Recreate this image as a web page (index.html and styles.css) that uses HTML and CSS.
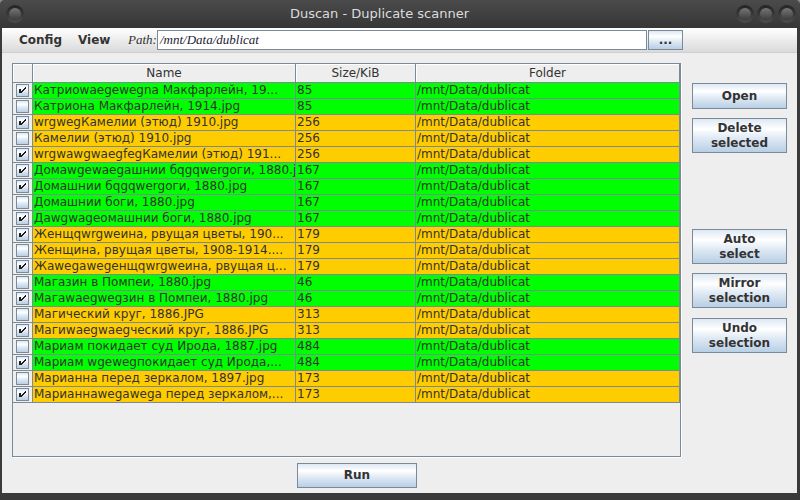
FILE: index.html
```
<!DOCTYPE html>
<html>
<head>
<meta charset="utf-8">
<link rel="stylesheet" href="styles.css">
</head>
<body>
<div class="window">
  <div class="titlebar">
    <div class="tb-left"><span class="orb"></span></div>
    <div class="tb-title">Duscan - Duplicate scanner</div>
    <div class="tb-right"><span class="orb"></span><span class="orb"></span><span class="orb"></span></div>
  </div>
  <div class="frame">
    <div class="menubar">
      <span class="menu m-config">Config</span>
      <span class="menu m-view">View</span>
      <span class="path-label">Path:</span>
      <div class="field">/mnt/Data/dublicat</div>
      <div class="btn dots">...</div>
    </div>
    <div class="main">
      <div class="left">
        <div class="table">
          <div class="row head">
            <div class="hc"></div><div class="hc">Name</div><div class="hc">Size/KiB</div><div class="hc">Folder</div>
          </div>
          <div class="row g"><div class="c cb"><span class="box on"><svg viewBox="0 0 11 11"><path d="M2 4h2v4H2z M4 6h1v2H4z M5 5h1v2H5z M6 4h1v2H6z M7 3h1v2H7z M8 2h1v2H8z"/></svg></span></div><div class="c">Катриowaegewegna Макфарлейн, 19...</div><div class="c">85</div><div class="c">/mnt/Data/dublicat</div></div>
          <div class="row g"><div class="c cb"><span class="box"></span></div><div class="c">Катриона Макфарлейн, 1914.jpg</div><div class="c">85</div><div class="c">/mnt/Data/dublicat</div></div>
          <div class="row o"><div class="c cb"><span class="box on"><svg viewBox="0 0 11 11"><path d="M2 4h2v4H2z M4 6h1v2H4z M5 5h1v2H5z M6 4h1v2H6z M7 3h1v2H7z M8 2h1v2H8z"/></svg></span></div><div class="c">wrgwegКамелии (этюд) 1910.jpg</div><div class="c">256</div><div class="c">/mnt/Data/dublicat</div></div>
          <div class="row o"><div class="c cb"><span class="box"></span></div><div class="c">Камелии (этюд) 1910.jpg</div><div class="c">256</div><div class="c">/mnt/Data/dublicat</div></div>
          <div class="row o"><div class="c cb"><span class="box on"><svg viewBox="0 0 11 11"><path d="M2 4h2v4H2z M4 6h1v2H4z M5 5h1v2H5z M6 4h1v2H6z M7 3h1v2H7z M8 2h1v2H8z"/></svg></span></div><div class="c">wrgwawgwaegfegКамелии (этюд) 191...</div><div class="c">256</div><div class="c">/mnt/Data/dublicat</div></div>
          <div class="row g"><div class="c cb"><span class="box on"><svg viewBox="0 0 11 11"><path d="M2 4h2v4H2z M4 6h1v2H4z M5 5h1v2H5z M6 4h1v2H6z M7 3h1v2H7z M8 2h1v2H8z"/></svg></span></div><div class="c">Домаwgewaegашнии бqgqwergоги, 1880.jpg</div><div class="c">167</div><div class="c">/mnt/Data/dublicat</div></div>
          <div class="row g"><div class="c cb"><span class="box on"><svg viewBox="0 0 11 11"><path d="M2 4h2v4H2z M4 6h1v2H4z M5 5h1v2H5z M6 4h1v2H6z M7 3h1v2H7z M8 2h1v2H8z"/></svg></span></div><div class="c">Домашнии бqgqwergоги, 1880.jpg</div><div class="c">167</div><div class="c">/mnt/Data/dublicat</div></div>
          <div class="row g"><div class="c cb"><span class="box"></span></div><div class="c">Домашнии боги, 1880.jpg</div><div class="c">167</div><div class="c">/mnt/Data/dublicat</div></div>
          <div class="row g"><div class="c cb"><span class="box on"><svg viewBox="0 0 11 11"><path d="M2 4h2v4H2z M4 6h1v2H4z M5 5h1v2H5z M6 4h1v2H6z M7 3h1v2H7z M8 2h1v2H8z"/></svg></span></div><div class="c">Даwgwageомашнии боги, 1880.jpg</div><div class="c">167</div><div class="c">/mnt/Data/dublicat</div></div>
          <div class="row o"><div class="c cb"><span class="box on"><svg viewBox="0 0 11 11"><path d="M2 4h2v4H2z M4 6h1v2H4z M5 5h1v2H5z M6 4h1v2H6z M7 3h1v2H7z M8 2h1v2H8z"/></svg></span></div><div class="c">Женщqwrgweина, рвущая цветы, 190...</div><div class="c">179</div><div class="c">/mnt/Data/dublicat</div></div>
          <div class="row o"><div class="c cb"><span class="box"></span></div><div class="c">Женщина, рвущая цветы, 1908-1914....</div><div class="c">179</div><div class="c">/mnt/Data/dublicat</div></div>
          <div class="row o"><div class="c cb"><span class="box on"><svg viewBox="0 0 11 11"><path d="M2 4h2v4H2z M4 6h1v2H4z M5 5h1v2H5z M6 4h1v2H6z M7 3h1v2H7z M8 2h1v2H8z"/></svg></span></div><div class="c">Жаwegawegенщqwrgweина, рвущая ц...</div><div class="c">179</div><div class="c">/mnt/Data/dublicat</div></div>
          <div class="row g"><div class="c cb"><span class="box"></span></div><div class="c">Магазин в Помпеи, 1880.jpg</div><div class="c">46</div><div class="c">/mnt/Data/dublicat</div></div>
          <div class="row g"><div class="c cb"><span class="box on"><svg viewBox="0 0 11 11"><path d="M2 4h2v4H2z M4 6h1v2H4z M5 5h1v2H5z M6 4h1v2H6z M7 3h1v2H7z M8 2h1v2H8z"/></svg></span></div><div class="c">Магawaegwegзин в Помпеи, 1880.jpg</div><div class="c">46</div><div class="c">/mnt/Data/dublicat</div></div>
          <div class="row o"><div class="c cb"><span class="box"></span></div><div class="c">Магический круг, 1886.JPG</div><div class="c">313</div><div class="c">/mnt/Data/dublicat</div></div>
          <div class="row o"><div class="c cb"><span class="box on"><svg viewBox="0 0 11 11"><path d="M2 4h2v4H2z M4 6h1v2H4z M5 5h1v2H5z M6 4h1v2H6z M7 3h1v2H7z M8 2h1v2H8z"/></svg></span></div><div class="c">Магиwaegwaegческий круг, 1886.JPG</div><div class="c">313</div><div class="c">/mnt/Data/dublicat</div></div>
          <div class="row g"><div class="c cb"><span class="box"></span></div><div class="c">Мариам покидает суд Ирода, 1887.jpg</div><div class="c">484</div><div class="c">/mnt/Data/dublicat</div></div>
          <div class="row g"><div class="c cb"><span class="box on"><svg viewBox="0 0 11 11"><path d="M2 4h2v4H2z M4 6h1v2H4z M5 5h1v2H5z M6 4h1v2H6z M7 3h1v2H7z M8 2h1v2H8z"/></svg></span></div><div class="c">Мариам wgewegпокидает суд Ирода,...</div><div class="c">484</div><div class="c">/mnt/Data/dublicat</div></div>
          <div class="row o"><div class="c cb"><span class="box"></span></div><div class="c">Марианна перед зеркалом, 1897.jpg</div><div class="c">173</div><div class="c">/mnt/Data/dublicat</div></div>
          <div class="row o"><div class="c cb"><span class="box on"><svg viewBox="0 0 11 11"><path d="M2 4h2v4H2z M4 6h1v2H4z M5 5h1v2H5z M6 4h1v2H6z M7 3h1v2H7z M8 2h1v2H8z"/></svg></span></div><div class="c">Марианнаwegawega перед зеркалом,...</div><div class="c">173</div><div class="c">/mnt/Data/dublicat</div></div>
        </div>
        <div class="runrow"><div class="btn run">Run</div></div>
      </div>
      <div class="side">
        <div class="btn open">Open</div>
        <div class="btn two del">Delete<br>selected</div>
        <div class="btn two auto">Auto<br>select</div>
        <div class="btn two mirror">Mirror<br>selection</div>
        <div class="btn two undo">Undo<br>selection</div>
      </div>
    </div>
  </div>
</div>
</body>
</html>
```
FILE: styles.css
```
* { box-sizing: border-box; }
html, body { margin: 0; padding: 0; }
body {
  width: 800px;
  height: 500px;
  overflow: hidden;
  background: #8a8a8a;
  font-family: "DejaVu Sans", sans-serif;
}
.window {
  width: 800px;
  height: 500px;
  background: #3a3a3a;
  border-radius: 5px 5px 0 0;
  display: flex;
  flex-direction: column;
}
.titlebar {
  height: 28px;
  flex: none;
  display: flex;
  align-items: center;
  background: linear-gradient(#4b4b4b, #363636);
  border-radius: 5px 5px 0 0;
}
.tb-left { width: 28px; padding-left: 6px; display: flex; }
.tb-title {
  flex: 1;
  text-align: center;
  color: #dcdcdc;
  font-size: 13px;
  line-height: 28px;
}
.tb-right { width: 69px; padding-left: 5px; display: flex; gap: 3px; }
.orb {
  width: 18px;
  height: 18px;
  border-radius: 50%;
  background: linear-gradient(#232323, #4e4e4e);
  display: flex;
  align-items: center;
  justify-content: center;
}
.orb::after {
  content: "";
  width: 12px;
  height: 12px;
  border-radius: 50%;
  background: linear-gradient(#767676, #3c3c3c);
}
.frame {
  flex: 1;
  margin: 0 3px 7px 2px;
  background: #eeeeee;
  display: flex;
  flex-direction: column;
}
.menubar {
  height: 25px;
  flex: none;
  border-bottom: 1px solid #cfcfcf;
  background: linear-gradient(#ffffff, #dadada);
  display: flex;
  align-items: center;
  padding-left: 17px;
}
.menu { font-weight: bold; font-size: 12px; color: #333333; }
.m-config { width: 59px; }
.m-view { width: 50px; }
.path-label {
  width: 29px;
  font-family: "Liberation Serif", serif;
  font-style: italic;
  font-size: 13px;
  color: #333333;
}
.field {
  width: 490px;
  height: 20px;
  border: 1px solid #7a8a99;
  background: #ffffff;
  font-family: "Liberation Serif", serif;
  font-style: italic;
  font-size: 13px;
  line-height: 18px;
  padding-left: 2px;
  color: #222233;
}
.btn {
  border: 1px solid #7a8a99;
  background: linear-gradient(#dde8f3 0%, #ffffff 30%, #dde8f3 60%, #b8cfe5 100%);
  font-weight: bold;
  font-size: 12px;
  color: #333333;
  text-align: center;
  display: flex;
  align-items: center;
  justify-content: center;
  line-height: 15px;
}
.dots { margin-left: 1px; width: 35px; height: 20px; }
.main { flex: 1; display: flex; padding: 10px 10px 0 10px; }
.left { width: 669px; display: flex; flex-direction: column; }
.table {
  height: 394px;
  border: 1px solid #7a8a99;
  box-shadow: 1px 1px 0 #ffffff;
  background: #eeeeee;
}
.row {
  display: grid;
  grid-template-columns: 20px 263px 120px 264px;
  height: 16px;
}
.row.head { height: 19px; }
.hc {
  border-right: 1px solid #7a8a99;
  border-bottom: 1px solid #7a8a99;
  box-shadow: inset 1px 1px 0 #ffffff;
  background: #eeeeee;
  font-size: 12px;
  color: #333333;
  text-align: center;
  line-height: 18px;
}
.c {
  border-right: 1px solid #7a8a99;
  border-bottom: 1px solid #7a8a99;
  font-size: 12px;
  color: #333333;
  line-height: 15px;
  padding-left: 1px;
  white-space: nowrap;
  overflow: hidden;
}
.row.g .c { background: #00ff00; }
.row.o .c { background: #ffcc00; }
.row .c.cb { background: #eeeeee; padding: 1px 0 0 3px; }
.box {
  display: block;
  width: 13px;
  height: 13px;
  border: 1px solid #7a8a99;
  background: linear-gradient(#dde8f3 0%, #ffffff 30%, #dde8f3 60%, #b8cfe5 100%);
}
.box svg { display: block; width: 11px; height: 11px; fill: #1e1e1e; shape-rendering: crispEdges; }
.runrow { padding: 6px 0 0 285px; }
.run { width: 120px; height: 25px; }
.side {
  margin-left: 11px;
  width: 95px;
  display: flex;
  flex-direction: column;
  padding-top: 20px;
}
.open { height: 26px; }
.two { height: 35px; }
.del { margin-top: 9px; }
.auto { margin-top: 76px; }
.mirror { margin-top: 9px; }
.undo { margin-top: 10px; }
```
